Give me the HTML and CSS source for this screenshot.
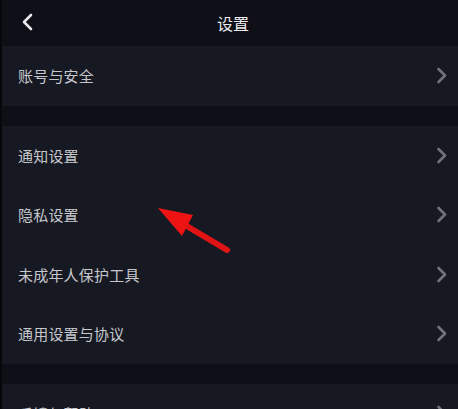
FILE: index.html
```html
<!DOCTYPE html>
<html lang="zh-CN">
<head>
    <meta charset="UTF-8">
    <title>设置</title>
    <link rel="stylesheet" href="styles.css">
</head>
<body>
    <div class="page">
        <div class="header">
            <span class="back">
                <svg width="12" height="18" viewBox="0 0 12 18"><path d="M10 2 L3 9 L10 16" fill="none" stroke="#e8e8ec" stroke-width="2.6" stroke-linecap="round" stroke-linejoin="round"/></svg>
            </span>
            <div class="title">设置</div>
        </div>

        <div class="group">
            <div class="row"><span>账号与安全</span><svg class="chev" width="12" height="17" viewBox="0 0 12 17"><path d="M2.5 2 L9 8.5 L2.5 15" /></svg></div>
        </div>

        <div class="group">
            <div class="row"><span>通知设置</span><svg class="chev" width="12" height="17" viewBox="0 0 12 17"><path d="M2.5 2 L9 8.5 L2.5 15" /></svg></div>
            <div class="row"><span>隐私设置</span><svg class="chev" width="12" height="17" viewBox="0 0 12 17"><path d="M2.5 2 L9 8.5 L2.5 15" /></svg></div>
            <div class="row"><span>未成年人保护工具</span><svg class="chev" width="12" height="17" viewBox="0 0 12 17"><path d="M2.5 2 L9 8.5 L2.5 15" /></svg></div>
            <div class="row"><span>通用设置与协议</span><svg class="chev" width="12" height="17" viewBox="0 0 12 17"><path d="M2.5 2 L9 8.5 L2.5 15" /></svg></div>
        </div>

        <div class="group">
            <div class="row"><span>反馈与帮助</span><svg class="chev" width="12" height="17" viewBox="0 0 12 17"><path d="M2.5 2 L9 8.5 L2.5 15" /></svg></div>
        </div>

        <!-- 标注箭头 -->
        <svg class="arrow" width="90" height="60" viewBox="0 0 90 60">
            <line x1="75" y1="48" x2="28" y2="20" stroke="#e01414" stroke-width="6" stroke-linecap="round"/>
            <polygon points="6,6 41,13 30,34" fill="#ee1414"/>
        </svg>
    </div>
</body>
</html>
```

FILE: styles.css
```css
* {
    margin: 0;
    padding: 0;
    box-sizing: border-box;
}

body {
    font-family: "Noto Sans CJK SC", "Noto Sans", sans-serif;
    background: #0e0f17;
    color: #c6c7cd;
    overflow: hidden;
}

.page {
    position: relative;
    width: 458px;
    height: 409px;
    overflow: hidden;
    border-left: 2px solid #07080c;
}

.header {
    height: 46px;
    display: flex;
    align-items: center;
    justify-content: center;
    position: relative;
}

.back {
    position: absolute;
    left: 19px;
    top: 13px;
    display: flex;
}

.title {
    font-size: 16px;
    color: #ececf0;
    margin-left: 6px;
}

.group {
    background: #171922;
    margin-bottom: 20px;
}

.row {
    height: 59.5px;
    display: flex;
    align-items: center;
    justify-content: space-between;
    padding: 0 10px 0 16px;
    font-size: 15px;
    letter-spacing: 0.2px;
}

.chev path {
    fill: none;
    stroke: #71737c;
    stroke-width: 2.6;
    stroke-linecap: round;
    stroke-linejoin: round;
}

.arrow {
    position: absolute;
    left: 150px;
    top: 202px;
}
```
